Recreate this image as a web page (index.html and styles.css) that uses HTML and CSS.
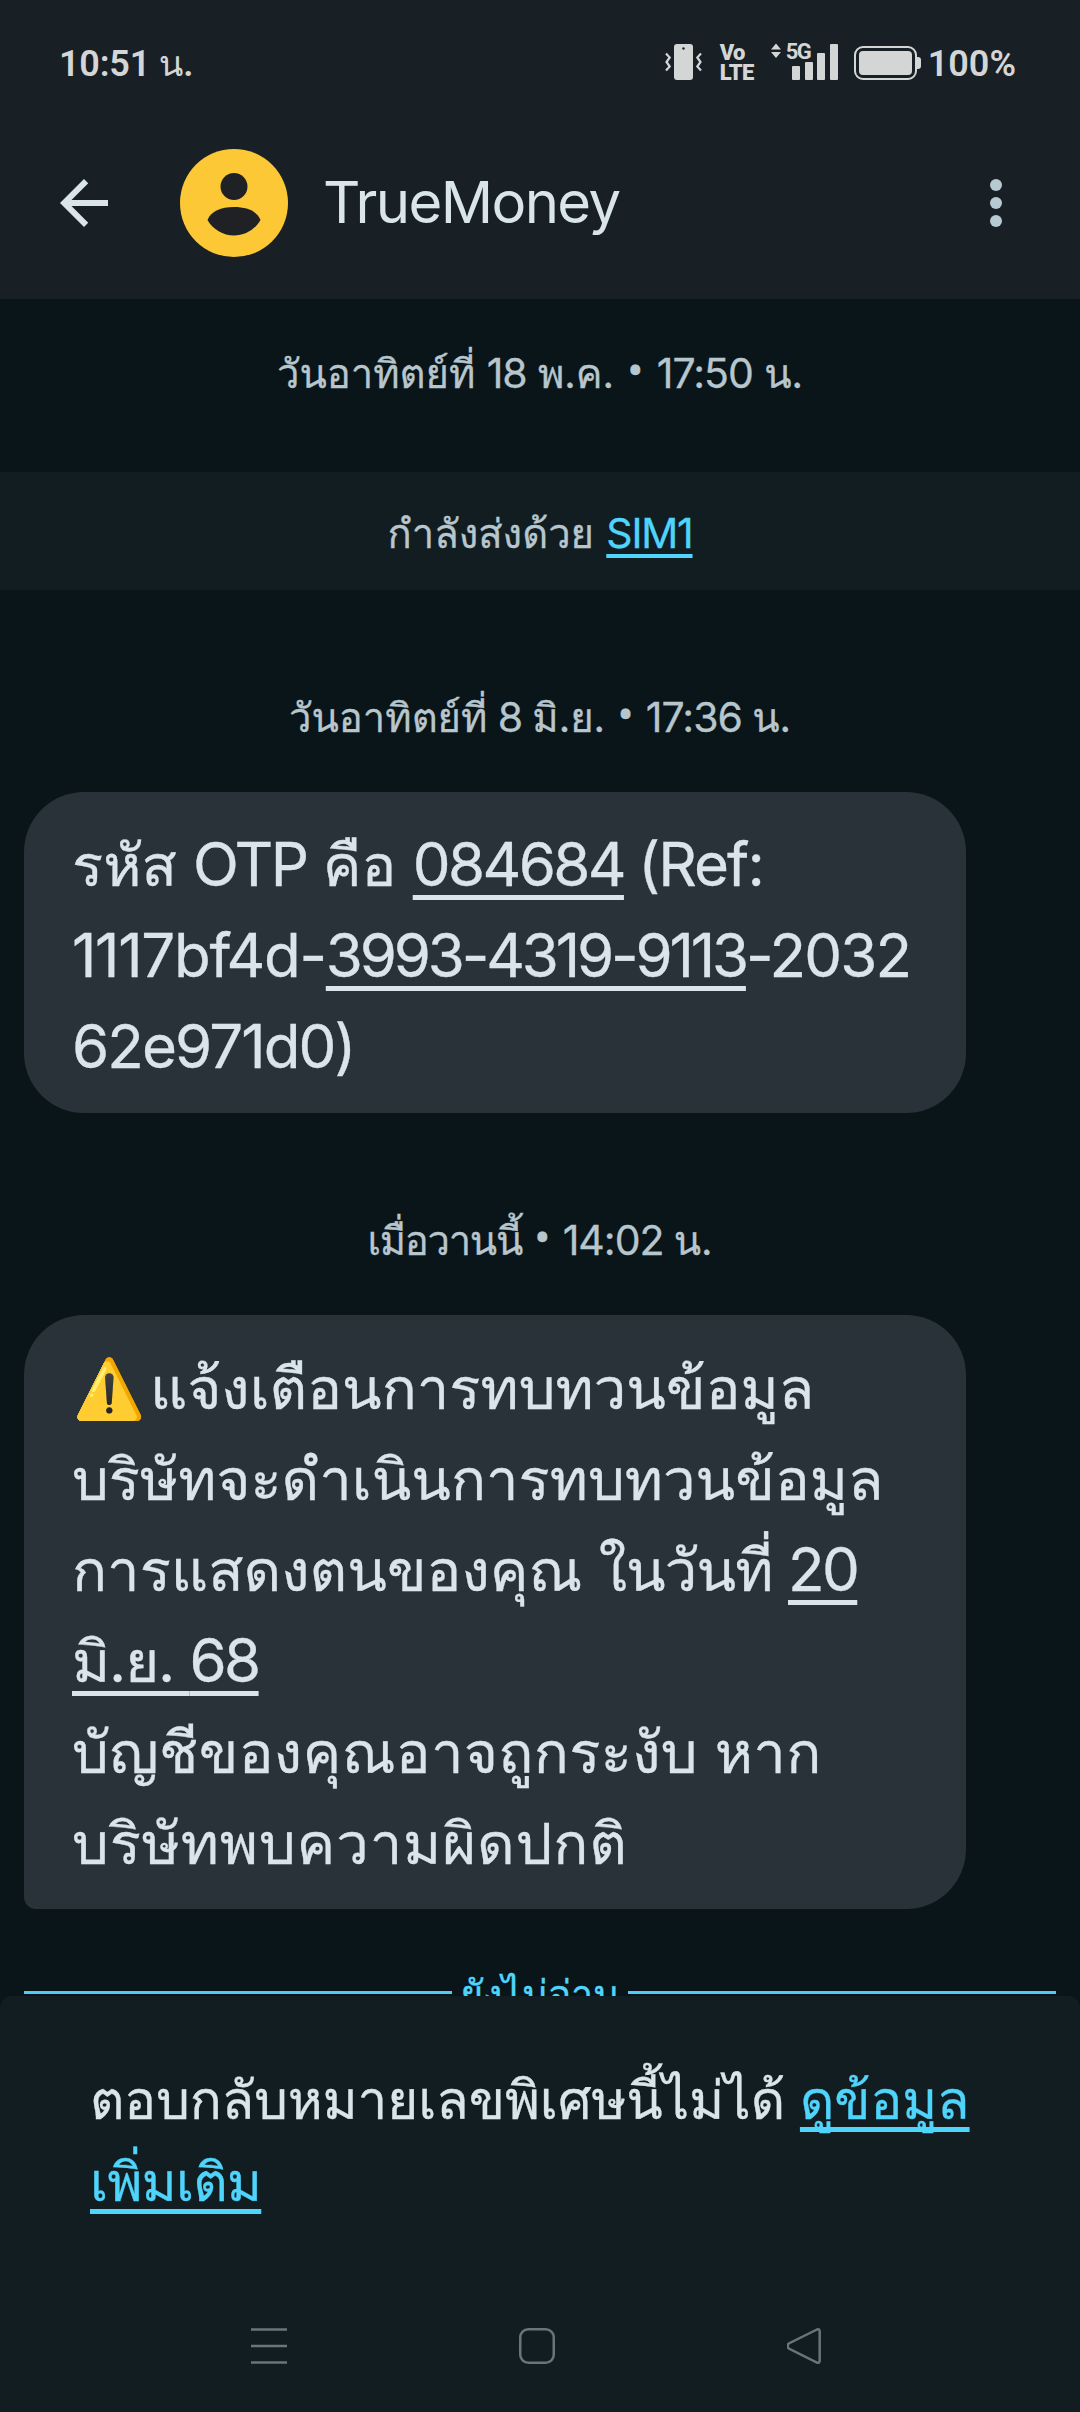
FILE: index.html
```html
<!DOCTYPE html>
<html lang="th">
<head>
<meta charset="utf-8">
<title>TrueMoney</title>
<link rel="stylesheet" href="styles.css">
</head>
<body>
<header class="header">
  <div class="status">
    <div class="clock"><b>10:51</b> น<b>.</b></div>
    <div class="status-icons">
      <svg class="vibrate" width="37" height="36" viewBox="0 0 37 36"><rect x="9" width="19" height="36" rx="3" fill="currentColor"/><circle cx="18.500" cy="4.500" r="1.200" fill="#182026"/><path d="M1 9.500l3.700 4-3.200 4.500 3.200 4.500-3.700 4M36 9.500l-3.700 4 3.200 4.500-3.200 4.500 3.700 4" fill="none" stroke="currentColor" stroke-width="2.200"/></svg>
      <div class="volte"><span>Vo</span><span>LTE</span></div>
      <div class="signal">
        <svg width="68" height="37" viewBox="0 0 68 37" fill="currentColor"><path d="M0 6.500l5-6 5 6zM0 9h10l-5 6z"/><rect x="21" y="23" width="8" height="14" rx="1"/><rect x="34" y="19" width="8" height="18" rx="1"/><rect x="46" y="10" width="8" height="27" rx="1"/><rect x="59" y="1" width="8" height="36" rx="1"/></svg>
        <span class="net">5G</span>
      </div>
      <svg class="battery" width="68" height="34" viewBox="0 0 68 34"><rect x="1" y="1" width="61" height="32" rx="8" fill="none" stroke="currentColor" stroke-width="2"/><rect x="5" y="5" width="53" height="24" rx="4" fill="currentColor"/><path d="M63 11h1a3 3 0 0 1 3 3v6a3 3 0 0 1-3 3h-1z" fill="currentColor"/></svg>
      <b>100%</b>
    </div>
  </div>
  <div class="appbar">
    <svg class="back" width="72" height="72" viewBox="0 0 24 24"><path d="M20 11H7.830l5.590-5.590L12 4l-8 8 8 8 1.410-1.410L7.830 13H20v-2z" fill="currentColor"/></svg>
    <svg class="avatar" width="108" height="108" viewBox="0 0 108 108"><circle cx="54" cy="54" r="54" fill="#fdc835"/><circle cx="54" cy="37.500" r="13.500" fill="#202124"/><path d="M27.500 71C31 62 41 58 54 58s23 4 26.500 13C75 80.500 65 86.500 54 86.500S33 80.500 27.500 71z" fill="#202124"/></svg>
    <h1 class="title">TrueMoney</h1>
    <svg class="more" width="12" height="48" viewBox="0 0 12 48" fill="#b7c9d1"><circle cx="6" cy="6" r="6"/><circle cx="6" cy="24" r="6"/><circle cx="6" cy="42" r="6"/></svg>
  </div>
</header>
<main class="thread">
  <div class="date date-first">วันอาทิตย์ที่ <i>18</i> พ.ค. <i class="dot">•</i> <i>17:50</i> น.</div>
  <div class="sim">กำลังส่งด้วย <a>SIM1</a></div>
  <div class="date date-otp">วันอาทิตย์ที่ <i>8</i> มิ.ย. <i class="dot">•</i> <i>17:36</i> น.</div>
  <div class="bubble">
    <div>รหัส <i>OTP</i> คือ <i><u>084684</u> <span class="ref-tail">(Ref:</span></i></div>
    <div><i><span class="ref-head">1117bf4d-</span><u class="ref-mid">3993-4319-9113</u><span class="ref-tail">-2032</span></i></div>
    <div><i class="ref-tail">62e971d0)</i></div>
  </div>
  <div class="date date-warn"><span class="tight">เมื่อวานนี้</span> <i class="dot">•</i> <i>14:02</i> น.</div>
  <div class="bubble bubble-last">
    <div><span class="emoji">⚠️</span>แจ้งเตือนการทบทวนข้อมูล</div>
    <div>บริษัทจะดำเนินการทบทวนข้อมูล</div>
    <div>การแสดงตนของคุณ <span class="tight">ในวันที่ </span><u><i>20</i></u></div>
    <div><u class="tight">มิ.ย. <i>68</i></u></div>
    <div class="wide">บัญชีของคุณอาจถูกระงับ หาก</div>
    <div class="wider">บริษัทพบความผิดปกติ</div>
  </div>
  <div class="unread"><span>ยังไม่อ่าน</span></div>
</main>
<footer class="panel">
  <p class="notice">ตอบกลับหมายเลขพิเศษนี้ไม่ได้ <a>ดูข้อมูล<br><span class="more-link">เพิ่มเติม</span></a></p>
  <nav class="nav">
    <svg width="36" height="36" viewBox="0 0 36 36"><path d="M0 1.500h36M0 18h36M0 34.500h36"/></svg>
    <svg width="36" height="36" viewBox="0 0 36 36"><rect x="1.250" y="1.250" width="33.500" height="33.500" rx="8"/></svg>
    <svg width="36" height="36" viewBox="0 0 36 36"><path d="M30 1.500L1.800 15.500q-2.500 2.500 0 5L30 34.500q2.700 1 2.700-2V3.500q0-3-2.700-2z"/></svg>
  </nav>
</footer>
</body>
</html>
```
FILE: styles.css
```css
* { box-sizing: border-box; }
body {
  margin: 0;
  width: 1080px;
  height: 2412px;
  overflow: hidden;
  background: #0a151a;
  color: #dae5eb;
  font-family: Inter, Loma, sans-serif;
  display: flex;
  flex-direction: column;
}
i { font-style: normal; line-height: 0; }
svg { display: block; flex: none; }

.header { height: 299px; background: #182026; flex: none; }
.status {
  height: 107px;
  padding: 37px 64px 0 59px;
  display: flex;
  justify-content: space-between;
  color: #d4d6d6;
  font: 36px/54px Roboto, Loma, sans-serif;
}
.status b { font-weight: 600; }
.clock { letter-spacing: -0.200px; }
.status-icons { display: flex; height: 54px; }
.vibrate { margin: 7px 18px 0 0; }
.volte {
  width: 34px;
  margin: 6px 17px 0 0;
  display: flex;
  flex-direction: column;
  font: 900 22px/20px Roboto, sans-serif;
  letter-spacing: -0.700px;
}
.signal { position: relative; margin: 6px 15px 0 0; }
.net { position: absolute; left: 15px; top: -2px; font: 700 22px/22px Roboto, sans-serif; letter-spacing: -1.500px; }
.battery { margin: 9px 6px 0 0; }
.appbar { height: 192px; display: flex; align-items: center; padding: 0 78px 0 48px; }
.avatar { margin: 0 35px 0 60px; }
.title { margin: 0 0 2px; flex: 1; font-size: 58px; font-weight: 400; line-height: 72px; letter-spacing: -1.600px; }

.thread { height: 1697px; flex: none; overflow: hidden; -webkit-text-stroke: 0.300px; }
.date { height: 60px; text-align: center; font-size: 40px; line-height: 60px; color: #b7c6cd; white-space: pre; }
.date i { font-size: 41px; letter-spacing: -1px; }
.date .dot { font-family: Roboto, sans-serif; margin: 0 2px; font-size: 48px; letter-spacing: 0; }
.date-first { margin-top: 45px; }
.sim {
  margin-top: 68px;
  height: 118px;
  background: #121d22;
  text-align: center;
  font-size: 40px;
  line-height: 124px;
  color: #b7c6cd;
}
.sim a { font-size: 41px; letter-spacing: -1.200px; line-height: 0; margin-left: 1px; text-decoration-thickness: 4px; text-underline-offset: 6px; }
a { color: #4fd4fb; text-decoration: underline; text-decoration-skip-ink: none; }
.date-otp { margin-top: 98px; word-spacing: -1px; }
.bubble {
  width: 942px;
  margin: 44px 0 0 24px;
  padding: 28px 0 20px 48px;
  background: #283238;
  border-radius: 60px;
  font-size: 58px;
  line-height: 91px;
  white-space: nowrap;
}
.bubble > div { height: 91px; }
.bubble i { font-size: 60px; letter-spacing: -2.600px; }
.bubble .ref-head { letter-spacing: -1.300px; }
.bubble .ref-mid { letter-spacing: -3.150px; }
.bubble .ref-tail { letter-spacing: -1.900px; }
.bubble u { text-decoration-thickness: 5px; text-underline-offset: 9px; text-decoration-skip-ink: none; }
.date-warn { margin-top: 98px; word-spacing: -1px; }
.date-warn .tight { letter-spacing: -1.300px; }
.bubble-last { border-bottom-left-radius: 12px; }
.emoji { margin: 0 5px 0 1px; letter-spacing: 0; }
.tight { letter-spacing: -0.900px; }
.wide { letter-spacing: 0.350px; }
.wider { letter-spacing: 0.850px; }
.unread {
  margin: 50px 24px 0;
  display: flex;
  align-items: center;
  font-size: 40px;
  line-height: 60px;
  letter-spacing: -0.500px;
  color: #4fd4fb;
  gap: 8px;
}
.unread span { margin-top: 6px; }
.unread::before, .unread::after { content: ""; flex: 1; height: 3px; background: #4fcbf4; }

.panel { flex: 1; background: #121d22; border-radius: 12px 12px 0 0; }
.notice { margin: 0; padding: 63px 80px 0 90px; height: 332px; font-size: 53px; line-height: 82px; letter-spacing: -0.050px; white-space: nowrap; -webkit-text-stroke: 0.300px; }
.notice a { text-decoration-thickness: 5px; text-underline-offset: 8px; }
.more-link { letter-spacing: -0.700px; }
.nav { display: flex; padding-left: 251px; gap: 232px; fill: none; stroke: #6b7478; stroke-width: 2.500px; }
```
